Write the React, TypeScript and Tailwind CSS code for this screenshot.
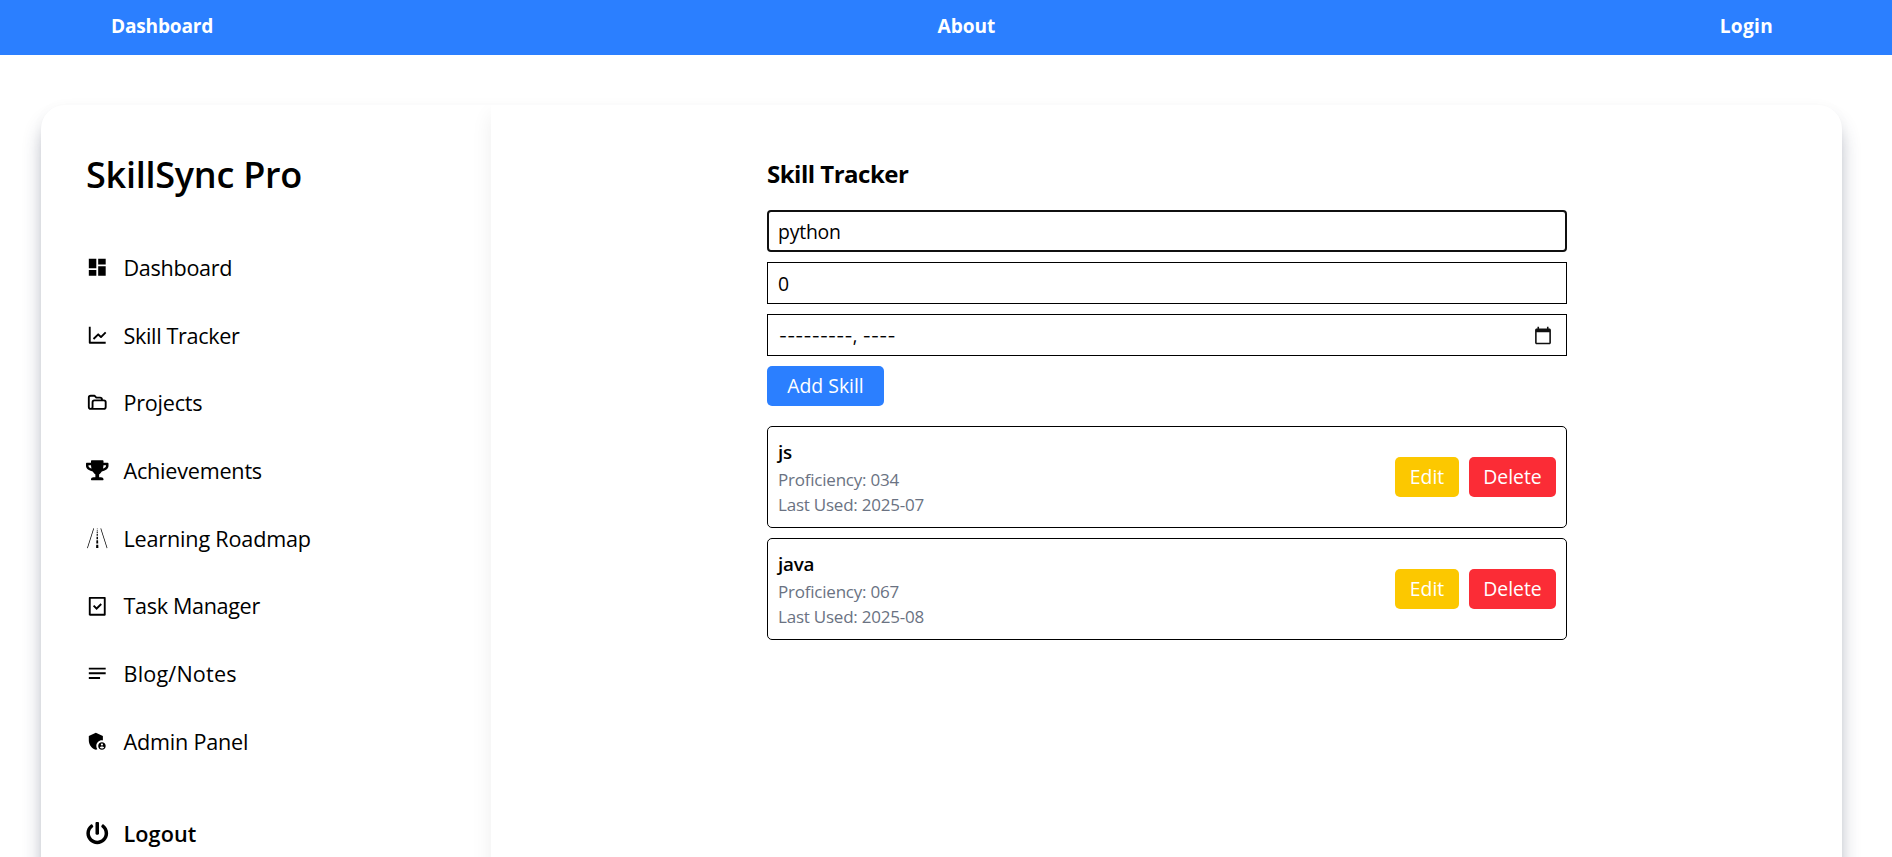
import type { IconType } from "react-icons";
import { MdDashboard, MdNotes, MdAdminPanelSettings } from "react-icons/md";
import { BiLineChart } from "react-icons/bi";
import { HiOutlineFolderOpen } from "react-icons/hi";
import { FaTrophy, FaPowerOff } from "react-icons/fa";
import { GiRoad } from "react-icons/gi";
import { RiTaskLine } from "react-icons/ri";

const menu: { label: string; Icon: IconType; tracking: string }[] = [
  { label: "Dashboard", Icon: MdDashboard, tracking: "tracking-[-0.3px]" },
  { label: "Skill Tracker", Icon: BiLineChart, tracking: "tracking-[-0.35px]" },
  { label: "Projects", Icon: HiOutlineFolderOpen, tracking: "tracking-[-0.24px]" },
  { label: "Achievements", Icon: FaTrophy, tracking: "tracking-[-0.22px]" },
  { label: "Learning Roadmap", Icon: GiRoad, tracking: "tracking-[-0.18px]" },
  { label: "Task Manager", Icon: RiTaskLine, tracking: "tracking-[-0.34px]" },
  { label: "Blog/Notes", Icon: MdNotes, tracking: "tracking-[0.18px]" },
  { label: "Admin Panel", Icon: MdAdminPanelSettings, tracking: "tracking-[-0.2px]" },
];

const skills = [
  { name: "js", proficiency: "034", lastUsed: "2025-07" },
  { name: "java", proficiency: "067", lastUsed: "2025-08" },
];

function CalendarIcon() {
  return (
    <svg className="h-[19px] w-[20px]" viewBox="0 0 24 24" fill="#101010">
      <path d="M20 3h-1V1h-2v2H7V1H5v2H4c-1.1 0-2 .9-2 2v16c0 1.1.9 2 2 2h16c1.1 0 2-.9 2-2V5c0-1.1-.9-2-2-2zm0 18H4V8h16v13z" />
    </svg>
  );
}

function Navbar() {
  return (
    <nav className="flex h-[55px] shrink-0 items-start justify-between bg-[#2b7fff] pt-[11px] pr-[119px] pl-[111px] text-[19.1px] leading-[30px] font-bold text-white">
      <a className="tracking-[-0.2px]">Dashboard</a>
      <a>About</a>
      <a className="tracking-[0.3px]">Login</a>
    </nav>
  );
}

function Sidebar() {
  return (
    <aside className="w-[450px] shrink-0 pl-[45px] text-[21.6px] leading-[35px]">
      <h1 className="pt-[46.500px] text-[36px] leading-[45px] font-semibold tracking-[-0.25px]">SkillSync Pro</h1>
      <ul className="mt-[37px]">
        {menu.map(({ label, Icon, tracking }) => (
          <li key={label} className="flex h-[67.7px] items-center gap-[15px]">
            <Icon size={22.5} />
            <span className={tracking}>{label}</span>
          </li>
        ))}
      </ul>
      <div className="mt-[24.5px] flex h-[67.7px] items-center gap-[15px] font-semibold">
        <FaPowerOff size={22.5} />
        <span className="tracking-[0.1px]">Logout</span>
      </div>
    </aside>
  );
}

function SkillTracker() {
  return (
    <div className="w-[800px] text-[19.4px] leading-[30px]">
      <h2 className="text-[24px] leading-[35px] font-bold tracking-[-0.5px]">Skill Tracker</h2>
      <form className="mt-[19px] flex flex-col items-start gap-[10px]">
        <div className="h-[42px] w-full rounded-[4px] border-2 border-[#101010] px-[9px] py-[5px] tracking-[-0.2px]">python</div>
        <div className="h-[42px] w-full border border-black px-[10px] py-[6px]">0</div>
        <div className="flex h-[42px] w-full items-center justify-between border border-black pr-[13px] pl-[11px]">
          <span className="pt-px font-['Inter',sans-serif] text-[17.4px] tracking-[0.18px]">---------, ----</span>
          <CalendarIcon />
        </div>
        <button type="button" className="h-[40px] w-[117px] rounded-[5px] bg-[#2b7fff] text-white">Add Skill</button>
      </form>
      <ul className="mt-[20px] flex flex-col gap-[10px]">
        {skills.map((s) => (
          <li key={s.name} className="flex h-[102px] items-center justify-between rounded-[5px] border border-black px-[10px]">
            <div>
              <p className="text-[18.8px] leading-[30px] font-semibold tracking-[-0.2px]">{s.name}</p>
              <p className="text-[17px] leading-[25px] tracking-[-0.22px] text-[#6a7282]">Proficiency: {s.proficiency}</p>
              <p className="text-[17px] leading-[25px] tracking-[-0.22px] text-[#6a7282]">Last Used: {s.lastUsed}</p>
            </div>
            <div className="flex gap-[10px] text-white">
              <button type="button" className="h-[40px] w-[64px] rounded-[5px] bg-[#fcc800]">Edit</button>
              <button type="button" className="h-[40px] w-[87px] rounded-[5px] bg-[#fb2c36]">Delete</button>
            </div>
          </li>
        ))}
      </ul>
    </div>
  );
}

export default function App() {
  return (
    <div className="flex h-[857px] flex-col overflow-hidden bg-white font-['Open_Sans',sans-serif] text-black">
      <Navbar />
      <main className="mt-[50px] mr-[50px] ml-[41px] flex h-[860px] shrink-0 overflow-hidden rounded-[24px] bg-white shadow-[0_15px_20px_-3px_rgba(50,60,90,0.42),0_0_16px_rgba(0,0,0,0.02)]">
        <Sidebar />
        <section className="flex grow pt-[51px] pl-[276px] shadow-[0_10px_20px_rgba(0,0,0,0.07)]">
          <SkillTracker />
        </section>
      </main>
    </div>
  );
}
